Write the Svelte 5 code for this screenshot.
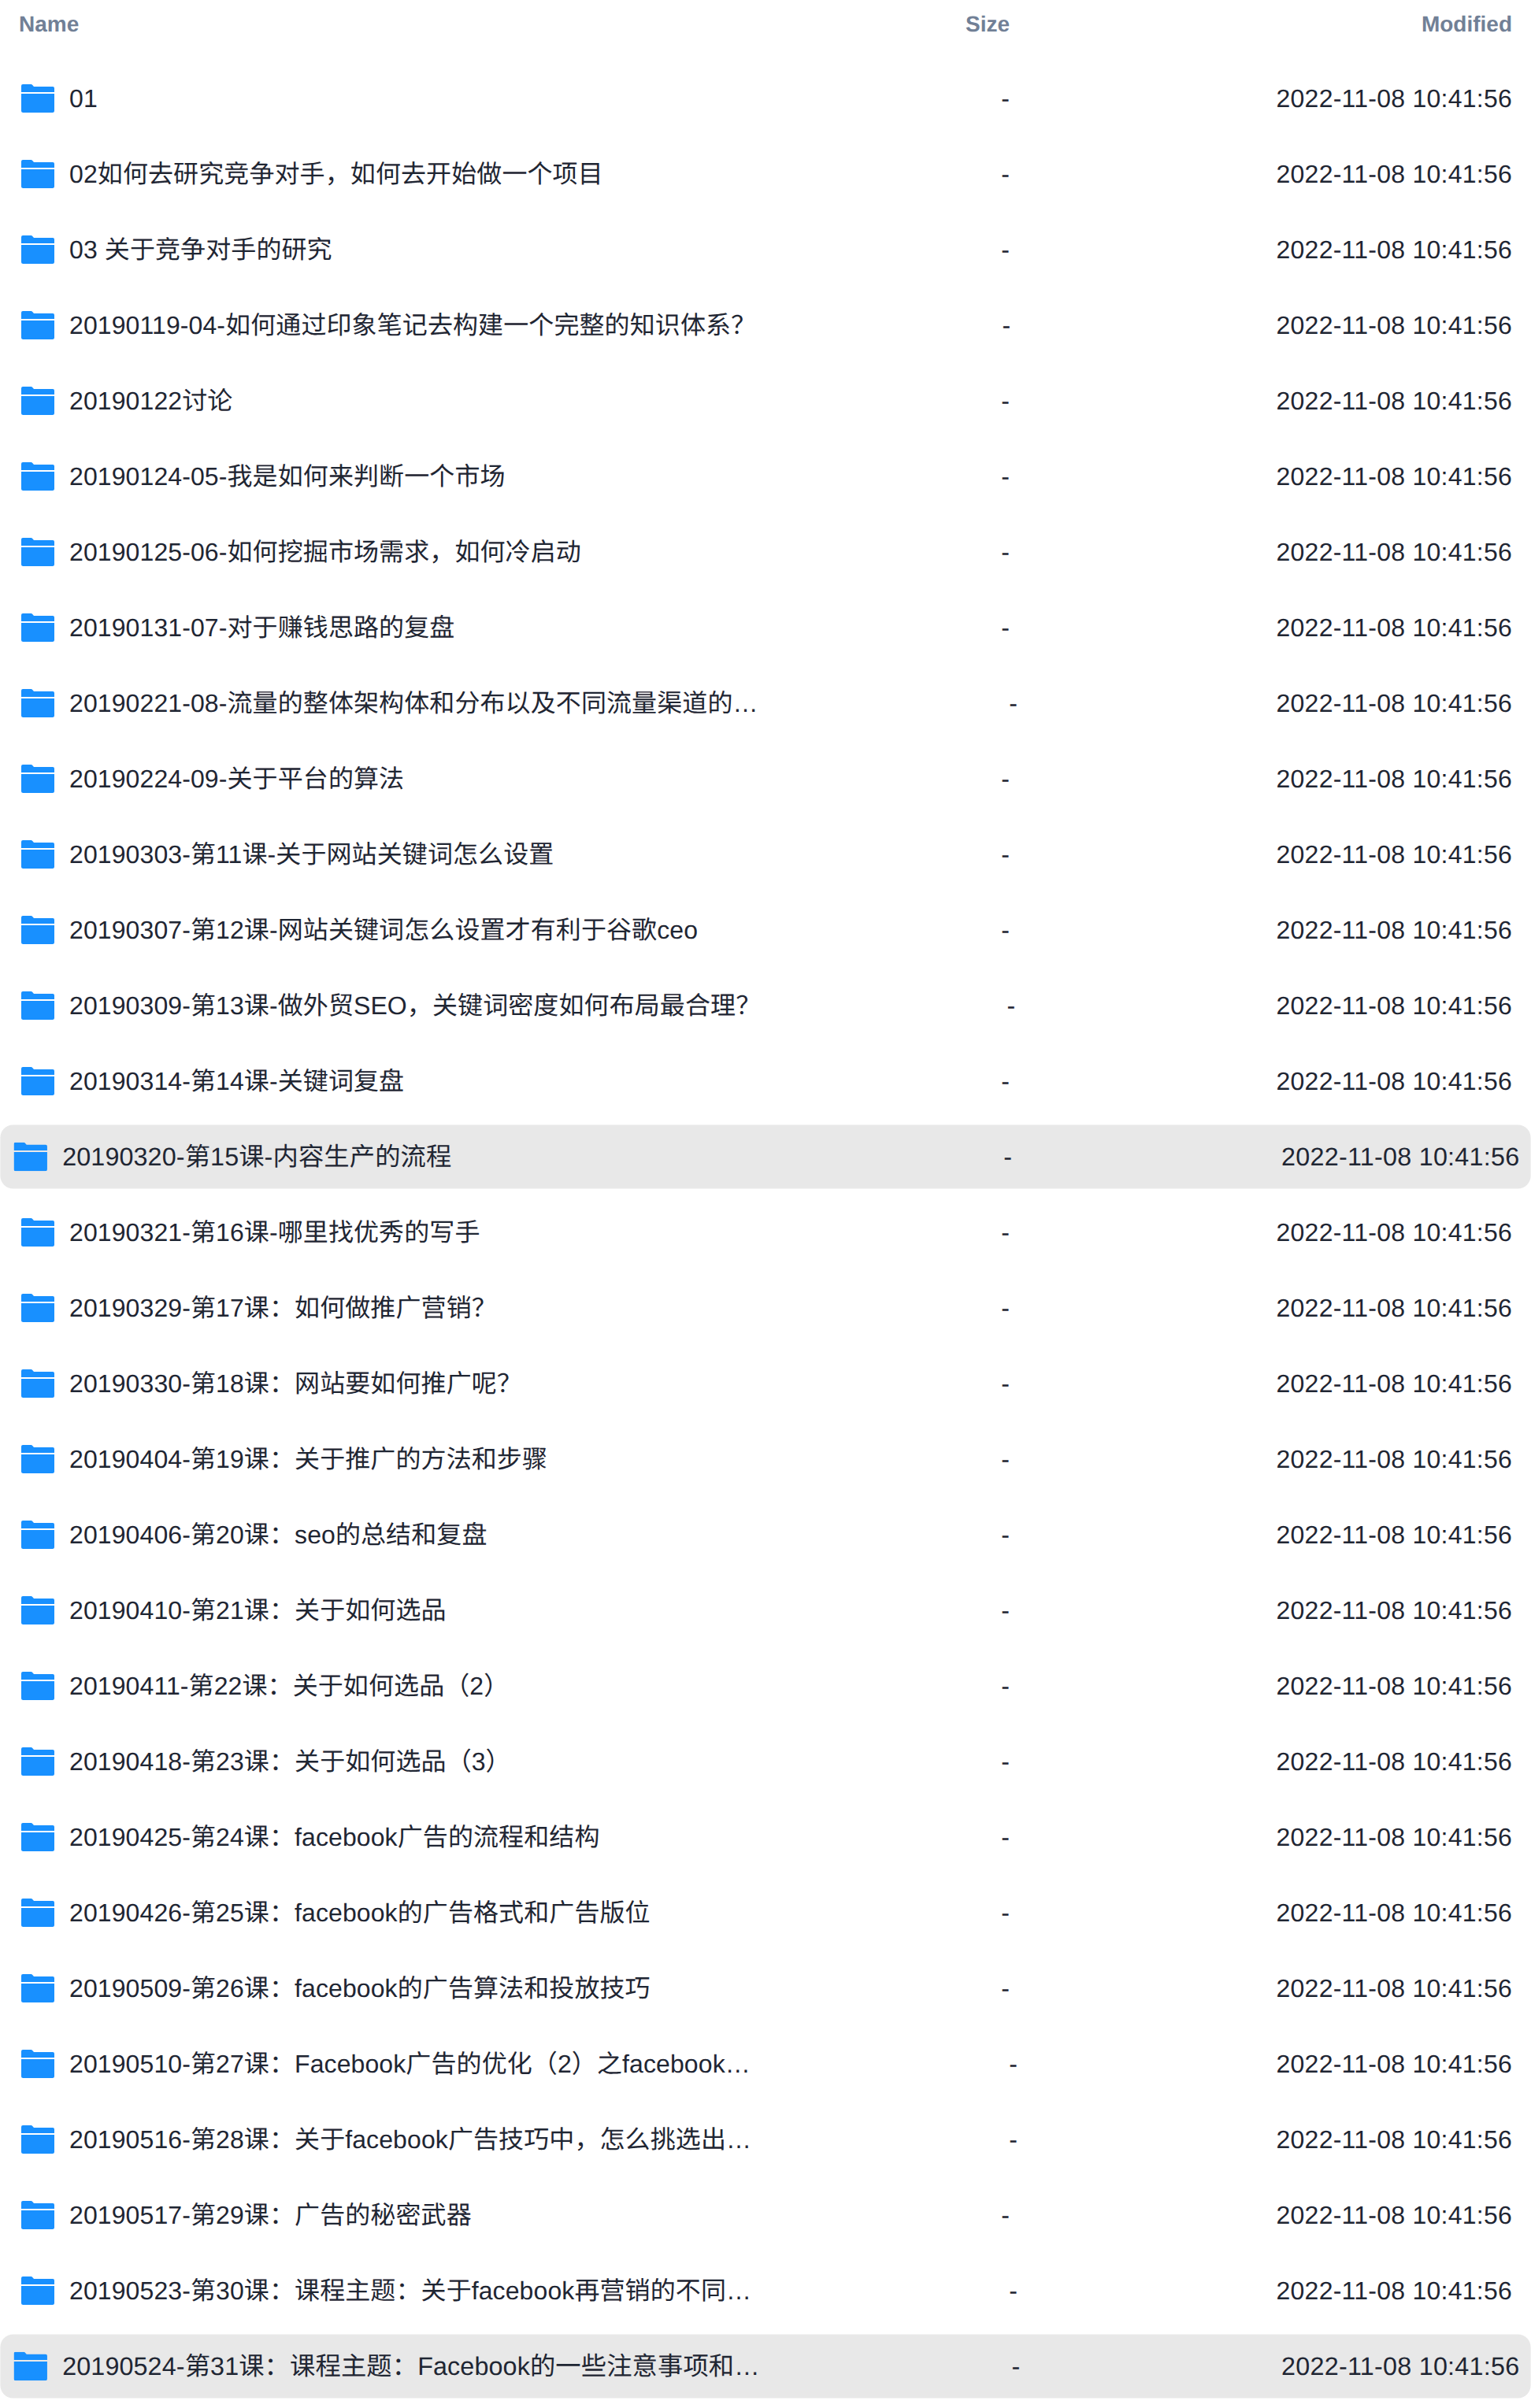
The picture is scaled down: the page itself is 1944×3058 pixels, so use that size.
<script lang="ts">
  const files = [
    { name: "01" },
    { name: "02如何去研究竞争对手，如何去开始做一个项目" },
    { name: "03 关于竞争对手的研究" },
    { name: "20190119-04-如何通过印象笔记去构建一个完整的知识体系？" },
    { name: "20190122讨论" },
    { name: "20190124-05-我是如何来判断一个市场" },
    { name: "20190125-06-如何挖掘市场需求，如何冷启动" },
    { name: "20190131-07-对于赚钱思路的复盘" },
    { name: "20190221-08-流量的整体架构体和分布以及不同流量渠道的…" },
    { name: "20190224-09-关于平台的算法" },
    { name: "20190303-第11课-关于网站关键词怎么设置" },
    { name: "20190307-第12课-网站关键词怎么设置才有利于谷歌ceo" },
    { name: "20190309-第13课-做外贸SEO，关键词密度如何布局最合理？" },
    { name: "20190314-第14课-关键词复盘" },
    { name: "20190320-第15课-内容生产的流程", active: true },
    { name: "20190321-第16课-哪里找优秀的写手" },
    { name: "20190329-第17课：如何做推广营销？" },
    { name: "20190330-第18课：网站要如何推广呢？" },
    { name: "20190404-第19课：关于推广的方法和步骤" },
    { name: "20190406-第20课：seo的总结和复盘" },
    { name: "20190410-第21课：关于如何选品" },
    { name: "20190411-第22课：关于如何选品（2）" },
    { name: "20190418-第23课：关于如何选品（3）" },
    { name: "20190425-第24课：facebook广告的流程和结构" },
    { name: "20190426-第25课：facebook的广告格式和广告版位" },
    { name: "20190509-第26课：facebook的广告算法和投放技巧" },
    { name: "20190510-第27课：Facebook广告的优化（2）之facebook…" },
    { name: "20190516-第28课：关于facebook广告技巧中，怎么挑选出…" },
    { name: "20190517-第29课：广告的秘密武器" },
    { name: "20190523-第30课：课程主题：关于facebook再营销的不同…" },
    { name: "20190524-第31课：课程主题：Facebook的一些注意事项和…", active: true },
  ];
  const modified = "2022-11-08 10:41:56";
</script>

<div class="list">
  <div class="head">
    <div class="col-name">Name</div>
    <div class="col-size">Size</div>
    <div class="col-time">Modified</div>
  </div>
  <div class="rows">
    {#each files as file}
      <div class="row" class:active={file.active}>
        <div class="col-name">
          <svg class="folder" viewBox="0 0 42 36" width="42" height="36">
            <path
              d="M0 10V2a2 2 0 0 1 2-2h10.500a2 2 0 0 1 1.500.700L16 3h24a2 2 0 0 1 2 2v5z"
            />
            <path
              d="M0 12h42v21.500a2.500 2.500 0 0 1-2.500 2.500h-37A2.500 2.500 0 0 1 0 33.500z"
            />
          </svg>
          <span class="title" class:cut={file.name.endsWith("…")}>{file.name}</span>
        </div>
        <div class="col-size">-</div>
        <div class="col-time">{modified}</div>
      </div>
    {/each}
  </div>
</div>

<style>
  :global(body) {
    background: #fff;
  }

  .list {
    padding: 0 10px;
    height: 3058px;
    box-sizing: border-box;
    font-family: "Liberation Sans", "Noto Sans CJK SC", sans-serif;
    font-size: 32px;
    line-height: 40px;
    color: #1f2633;
    text-rendering: geometricPrecision;
  }

  .head {
    display: flex;
    align-items: center;
    height: 62px;
    padding: 0 14px 0 14px;
    margin-bottom: 23px;
    font-size: 28px;
    font-weight: 700;
    color: #718096;
  }

  .head .col-name {
    min-width: 935px;
  }

  .rows {
    display: flex;
    flex-direction: column;
    gap: 16px;
  }

  .row {
    display: flex;
    align-items: center;
    height: 80px;
    padding: 0 14px 0 17px;
    border-radius: 16px;
  }

  .row.active {
    background: #e8e8e8;
    transform: scale(1.01);
  }

  .col-name {
    display: flex;
    align-items: center;
    gap: 19px;
    flex: none;
    min-width: 932px;
    white-space: nowrap;
  }

  .title {
    letter-spacing: 0.1px;
  }

  .title.cut {
    width: 881px;
  }

  .col-size {
    flex: none;
    width: 323px;
    text-align: right;
  }

  .col-time {
    flex: 1;
    text-align: right;
  }

  .row .col-time {
    letter-spacing: 0.25px;
  }

  .folder {
    flex: none;
    fill: #1890ff;
  }
</style>
